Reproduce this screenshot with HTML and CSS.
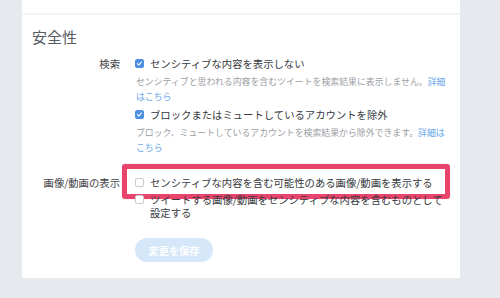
FILE: index.html
```html
<!DOCTYPE html>
<html lang="ja">
<head>
    <meta charset="UTF-8">
    <meta name="viewport" content="width=device-width, initial-scale=1.0">
    <title>設定</title>
    <link rel="stylesheet" href="styles.css">
</head>
<body>
    <div class="page">
        <div class="card-top"></div>
        <section class="card">
            <h2 class="title">安全性</h2>

            <div class="row">
                <div class="label">検索</div>
                <div class="field">
                    <label class="option">
                        <span class="box checked">
                            <svg viewBox="0 0 10 10" width="7" height="7"><path d="M2 5.2l2 2 4-4.4" fill="none" stroke="#fff" stroke-width="1.5" stroke-linecap="round" stroke-linejoin="round"/></svg>
                        </span>
                        <span class="text">センシティブな内容を表示しない</span>
                    </label>
                    <p class="desc">センシティブと思われる内容を含むツイートを検索結果に表示しません。<a href="#">詳細はこちら</a></p>

                    <label class="option">
                        <span class="box checked">
                            <svg viewBox="0 0 10 10" width="7" height="7"><path d="M2 5.2l2 2 4-4.4" fill="none" stroke="#fff" stroke-width="1.5" stroke-linecap="round" stroke-linejoin="round"/></svg>
                        </span>
                        <span class="text">ブロックまたはミュートしているアカウントを除外</span>
                    </label>
                    <p class="desc">ブロック、ミュートしているアカウントを検索結果から除外できます。<a href="#">詳細はこちら</a></p>
                </div>
            </div>

            <div class="row media">
                <div class="label">画像/動画の表示</div>
                <div class="field">
                    <label class="option">
                        <span class="box"></span>
                        <span class="text">センシティブな内容を含む可能性のある画像/動画を表示する</span>
                        <span class="highlight"></span>
                    </label>
                    <label class="option">
                        <span class="box"></span>
                        <span class="text">ツイートする画像/動画をセンシティブな内容を含むものとして設定する</span>
                    </label>
                </div>
            </div>

            <button class="save">変更を保存</button>
        </section>
    </div>
</body>
</html>
```

FILE: styles.css
```css
*{
    margin: 0;
    padding: 0;
    box-sizing: border-box;
    font-family: "Noto Sans CJK JP", "Noto Sans", sans-serif;
}
body{
    background-color: #e6e9ee;
    min-height: 100vh;
}
.page{
    margin-left: 22px;
    width: 438px;
}
.card-top{
    background-color: #fff;
    height: 15px;
    border-bottom: 2px solid #f3f4f6;
}
.card{
    background-color: #fff;
    padding: 13px 0 16px 0;
}
.title{
    font-size: 15px;
    line-height: 18px;
    font-weight: 400;
    color: #555a60;
    margin-left: 10px;
    margin-bottom: 11px;
}
.row{
    display: grid;
    grid-template-columns: 113px 313px;
}
.row.media{
    margin-top: 17px;
}
.label{
    font-size: 10.35px;
    line-height: 13px;
    color: #3f4246;
    text-align: right;
    padding-right: 15px;
}
.option{
    position: relative;
    display: flex;
    align-items: flex-start;
    gap: 6px;
    font-size: 10.35px;
    line-height: 13px;
    color: #363a3e;
}
.option + .option{
    margin-top: 4px;
}
.box{
    flex: none;
    width: 9px;
    height: 9px;
    margin-top: 2px;
    border: 1px solid #c8ccd1;
    border-radius: 2px;
    background-color: #fff;
    display: flex;
    justify-content: center;
    align-items: center;
}
.box.checked{
    background-color: #4d8fe2;
    border-color: #4d8fe2;
}
.text{
    flex: 1;
}
.desc{
    font-size: 8.9px;
    line-height: 15px;
    color: #9a9ea4;
    margin: 4px 0 4px 1px;
}
.desc a{
    color: #69a6e9;
    text-decoration: none;
}
.highlight{
    position: absolute;
    left: -13px;
    top: -12px;
    width: 328px;
    height: 35px;
    border: 5px solid #e8446c;
    border-radius: 3px;
    box-shadow: 0 0 1px rgba(180, 30, 70, 0.5);
}
.save{
    display: block;
    margin: 19px 0 0 113px;
    width: 78px;
    height: 24px;
    border: none;
    border-radius: 12px;
    background-color: #d6e7f9;
    color: #fff;
    font-size: 10.2px;
    font-weight: 700;
}
```
